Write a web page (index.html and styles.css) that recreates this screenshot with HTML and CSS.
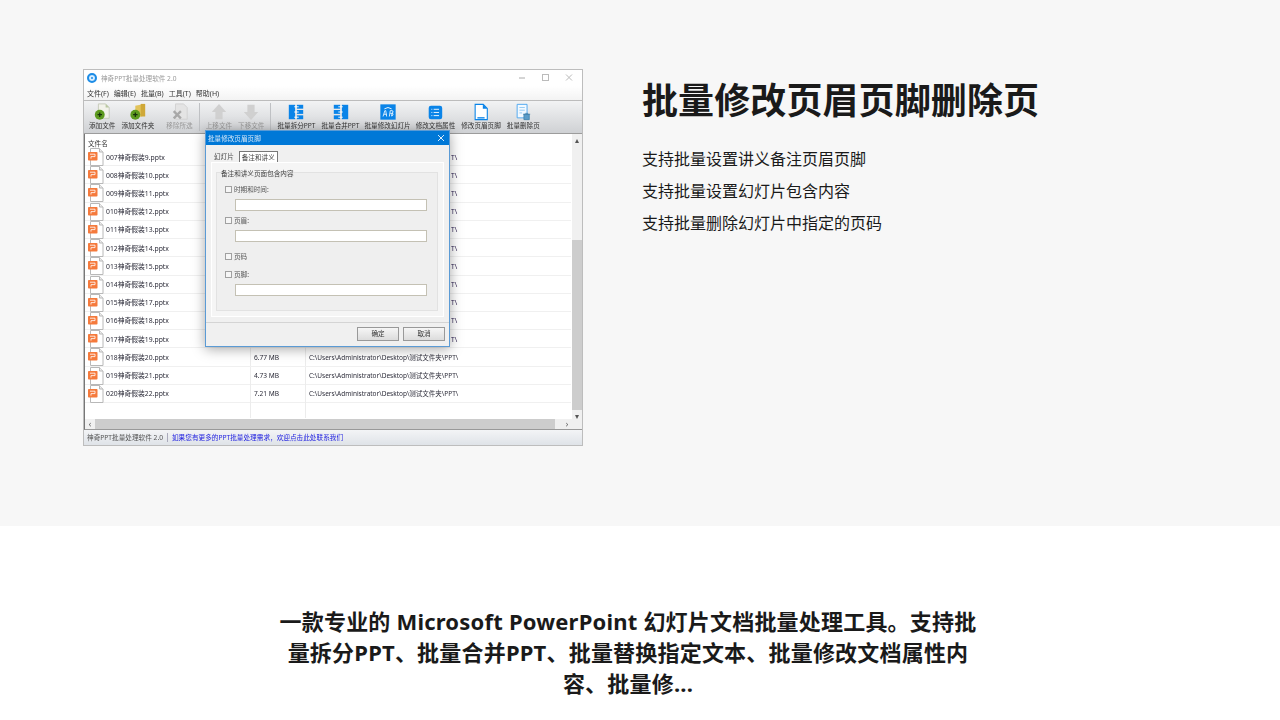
FILE: index.html
```html
<!DOCTYPE html>
<html lang="zh-CN">
<head>
    <meta charset="UTF-8">
    <meta name="viewport" content="width=device-width, initial-scale=1.0">
    <title>批量修改页眉页脚删除页</title>
    <link rel="stylesheet" href="styles.css">
</head>
<body>
    <svg class="defs" width="0" height="0">
        <symbol id="ppt" viewBox="0 0 16 18">
            <path d="M2.500 .5h9l3.500 3.500v13.500h-12.500z" fill="#fff" stroke="#b8b8b8"/>
            <path d="M11.500 .5v3.500h3.500" fill="#ececec" stroke="#b8b8b8"/>
            <rect x="0" y="4" width="9.500" height="8.500" rx=".8" fill="#f57a3c"/>
            <path d="M2 6.200h5v2.400h-4v2" fill="none" stroke="#fff" stroke-width=".8"/>
        </symbol>
    </svg>

    <section class="feature">
        <div class="shot">
            <div class="shot-top"></div>
            <div class="titlebar">
                <span class="app-logo"></span>
                <span class="app-name">神奇PPT批量处理软件 2.0</span>
                <span class="win-btns">
                    <svg width="60" height="12" viewBox="0 0 60 12">
                        <path d="M2 6h6" stroke="#aaa" fill="none"/>
                        <rect x="25.500" y="2.500" width="6" height="6" stroke="#bbb" fill="none"/>
                        <path d="M49 2.500l6 6M55 2.500l-6 6" stroke="#bbb" fill="none"/>
                    </svg>
                </span>
            </div>
            <div class="menubar">
                <span>文件(F)</span><span>编辑(E)</span><span>批量(B)</span><span>工具(T)</span><span>帮助(H)</span>
            </div>
            <div class="toolbar">
                <div class="tool">
                    <svg viewBox="0 0 20 20">
                        <path d="M6 1h8l4 4v12H6z" fill="#f2f2ea" stroke="#c4c8b8"/>
                        <path d="M14 1v4h4z" fill="#b8c8a0"/>
                        <circle cx="7.500" cy="13" r="5.500" fill="#5d9a1e"/>
                        <path d="M5 13h5M7.500 10.500v5" stroke="#16300a" stroke-width="1.400"/>
                    </svg>
                    <span>添加文件</span>
                </div>
                <div class="tool">
                    <svg viewBox="0 0 20 20">
                        <path d="M7 3l10-2v13l-10 3z" fill="#e2c35a"/>
                        <path d="M13 1h5v14h-5z" fill="#cfa838"/>
                        <circle cx="7" cy="13" r="5.500" fill="#5d9a1e"/>
                        <path d="M4.500 13h5M7 10.500v5" stroke="#16300a" stroke-width="1.400"/>
                    </svg>
                    <span>添加文件夹</span>
                </div>
                <div class="tool tool-off tool-gap">
                    <svg viewBox="0 0 20 20">
                        <path d="M5 1h9l4 4v13H5z" fill="#e4e4e4" stroke="#d0d0d0"/>
                        <path d="M3 9l8 8M11 9l-8 8" stroke="#a8a8a8" stroke-width="2.600"/>
                    </svg>
                    <span>移除所选</span>
                </div>
                <i class="tool-sep"></i>
                <div class="tool tool-off">
                    <svg viewBox="0 0 20 20">
                        <path d="M10 1l8 9h-4v8H6v-8H2z" fill="#d0d0d0"/>
                    </svg>
                    <span>上移文件</span>
                </div>
                <div class="tool tool-off">
                    <svg viewBox="0 0 20 20">
                        <path d="M10 19l8-9h-4V2H6v8H2z" fill="#d0d0d0"/>
                    </svg>
                    <span>下移文件</span>
                </div>
                <i class="tool-sep"></i>
                <div class="tool">
                    <svg viewBox="0 0 20 20">
                        <rect x="2" y="2" width="7" height="16" fill="#0a84e8"/>
                        <rect x="11" y="2" width="7" height="4.300" fill="#0a84e8"/>
                        <rect x="11" y="7.800" width="7" height="4.300" fill="#0a84e8"/>
                        <rect x="11" y="13.700" width="7" height="4.300" fill="#0a84e8"/>
                        <path d="M8 4.200h5M8 10h5M8 15.800h5" stroke="#fff"/>
                    </svg>
                    <span>批量拆分PPT</span>
                </div>
                <div class="tool">
                    <svg viewBox="0 0 20 20">
                        <rect x="11" y="2" width="7" height="16" fill="#0a84e8"/>
                        <rect x="2" y="2" width="7" height="4.300" fill="#0a84e8"/>
                        <rect x="2" y="7.800" width="7" height="4.300" fill="#0a84e8"/>
                        <rect x="2" y="13.700" width="7" height="4.300" fill="#0a84e8"/>
                        <path d="M7 4.200h5M7 10h5M7 15.800h5" stroke="#fff"/>
                    </svg>
                    <span>批量合并PPT</span>
                </div>
                <div class="tool tool-tight">
                    <svg viewBox="0 0 20 20">
                        <rect x="1.500" y="1.500" width="17" height="17" fill="#0a84e8"/>
                        <path d="M6 6.500q4-3 8 0" stroke="#fff" fill="none"/>
                        <path d="M4.500 15l2-6.500h1l1 6.500M5.500 12.500h3M11.500 15l1-6.500h2q1.500 0 1 1.500t-1 1.500h-2m2 0q1.500 0 1 1.500t-1.500 1.500z" stroke="#fff" fill="none" stroke-width=".9"/>
                    </svg>
                    <span>批量修改幻灯片</span>
                </div>
                <div class="tool tool-tight">
                    <svg viewBox="0 0 20 20">
                        <rect x="3" y="3" width="15" height="15" rx="2.500" fill="#0a84e8"/>
                        <path d="M8.500 7h6M8.500 10.500h6M8.500 14h6M6 7h1M6 10.500h1M6 14h1" stroke="#fff"/>
                    </svg>
                    <span>修改文档属性</span>
                </div>
                <div class="tool">
                    <svg viewBox="0 0 20 20">
                        <path d="M3.500 1.500h9l4.500 4.500v12.500H3.500z" fill="#fff" stroke="#0a84e8" stroke-width="1.200"/>
                        <path d="M12 1.500v5h5z" fill="#0a84e8"/>
                        <path d="M6 16.500h8" stroke="#0a84e8" stroke-width="1.500"/>
                    </svg>
                    <span>修改页眉页脚</span>
                </div>
                <div class="tool">
                    <svg viewBox="0 0 20 20">
                        <path d="M3.500 1.500h11v15h-11z" fill="#f2f9ff" stroke="#46a4ef"/>
                        <path d="M6 5h6M6 8h6M6 11h3" stroke="#8cc6f2"/>
                        <path d="M11 12.500h6v6h-6zM10 12.500h8M12.500 11.500h3" fill="#5b9cc8" stroke="#3c7ea8" stroke-width=".8"/>
                    </svg>
                    <span>批量删除页</span>
                </div>
            </div>

            <div class="list">
                <div class="list-main">
                    <div class="list-body">
                        <div class="list-head">文件名</div>
                        <div class="row"><div class="cell-name"><svg class="ppt" width="16" height="18"><use href="#ppt"/></svg>007神奇假装9.pptx</div><div class="cell-size"></div><div class="cell-tail">T\</div></div>
                        <div class="row"><div class="cell-name"><svg class="ppt" width="16" height="18"><use href="#ppt"/></svg>008神奇假装10.pptx</div><div class="cell-size"></div><div class="cell-tail">T\</div></div>
                        <div class="row"><div class="cell-name"><svg class="ppt" width="16" height="18"><use href="#ppt"/></svg>009神奇假装11.pptx</div><div class="cell-size"></div><div class="cell-tail">T\</div></div>
                        <div class="row"><div class="cell-name"><svg class="ppt" width="16" height="18"><use href="#ppt"/></svg>010神奇假装12.pptx</div><div class="cell-size"></div><div class="cell-tail">T\</div></div>
                        <div class="row"><div class="cell-name"><svg class="ppt" width="16" height="18"><use href="#ppt"/></svg>011神奇假装13.pptx</div><div class="cell-size"></div><div class="cell-tail">T\</div></div>
                        <div class="row"><div class="cell-name"><svg class="ppt" width="16" height="18"><use href="#ppt"/></svg>012神奇假装14.pptx</div><div class="cell-size"></div><div class="cell-tail">T\</div></div>
                        <div class="row"><div class="cell-name"><svg class="ppt" width="16" height="18"><use href="#ppt"/></svg>013神奇假装15.pptx</div><div class="cell-size"></div><div class="cell-tail">T\</div></div>
                        <div class="row"><div class="cell-name"><svg class="ppt" width="16" height="18"><use href="#ppt"/></svg>014神奇假装16.pptx</div><div class="cell-size"></div><div class="cell-tail">T\</div></div>
                        <div class="row"><div class="cell-name"><svg class="ppt" width="16" height="18"><use href="#ppt"/></svg>015神奇假装17.pptx</div><div class="cell-size"></div><div class="cell-tail">T\</div></div>
                        <div class="row"><div class="cell-name"><svg class="ppt" width="16" height="18"><use href="#ppt"/></svg>016神奇假装18.pptx</div><div class="cell-size"></div><div class="cell-tail">T\</div></div>
                        <div class="row"><div class="cell-name"><svg class="ppt" width="16" height="18"><use href="#ppt"/></svg>017神奇假装19.pptx</div><div class="cell-size"></div><div class="cell-tail">T\</div></div>
                        <div class="row"><div class="cell-name"><svg class="ppt" width="16" height="18"><use href="#ppt"/></svg>018神奇假装20.pptx</div><div class="cell-size">6.77 MB</div><div class="cell-path">C:\Users\Administrator\Desktop\测试文件夹\PPT\</div></div>
                        <div class="row"><div class="cell-name"><svg class="ppt" width="16" height="18"><use href="#ppt"/></svg>019神奇假装21.pptx</div><div class="cell-size">4.73 MB</div><div class="cell-path">C:\Users\Administrator\Desktop\测试文件夹\PPT\</div></div>
                        <div class="row"><div class="cell-name"><svg class="ppt" width="16" height="18"><use href="#ppt"/></svg>020神奇假装22.pptx</div><div class="cell-size">7.21 MB</div><div class="cell-path">C:\Users\Administrator\Desktop\测试文件夹\PPT\</div></div>
                        <div class="row row-empty"><div class="cell-name"></div><div class="cell-size"></div><div class="cell-path"></div></div>
                    </div>
                    <div class="vscroll">
                        <span class="arrow">▴</span>
                        <div class="vscroll-track"><div class="vscroll-thumb"></div></div>
                        <span class="arrow">▾</span>
                    </div>
                </div>
                <div class="hscroll">
                    <span class="arrow">‹</span>
                    <div class="hscroll-thumb"></div>
                    <span class="arrow">›</span>
                </div>
            </div>

            <div class="statusbar">
                <span class="status-name">神奇PPT批量处理软件 2.0</span>
                <span class="status-link">如果您有更多的PPT批量处理需求，欢迎点击此处联系我们</span>
            </div>

            <div class="dialog">
                <div class="dialog-title">
                    <span>批量修改页眉页脚</span>
                    <svg width="8" height="8" viewBox="0 0 8 8"><path d="M1 1l6 6M7 1l-6 6" stroke="#dcecfa" fill="none"/></svg>
                </div>
                <div class="tabs">
                    <span class="tab">幻灯片</span>
                    <span class="tab tab-on">备注和讲义</span>
                </div>
                <div class="tab-panel">
                    <div class="group">
                        <div class="group-label">备注和讲义页面包含内容</div>
                        <label class="check"><i></i>时期和时间:</label>
                        <div class="field"></div>
                        <label class="check"><i></i>页眉:</label>
                        <div class="field"></div>
                        <label class="check check-code"><i></i>页码</label>
                        <label class="check"><i></i>页脚:</label>
                        <div class="field"></div>
                    </div>
                </div>
                <div class="dialog-foot">
                    <span class="btn">确定</span>
                    <span class="btn">取消</span>
                </div>
            </div>
        </div>

        <div class="feature-text">
            <h2>批量修改页眉页脚删除页</h2>
            <p>支持批量设置讲义备注页眉页脚</p>
            <p>支持批量设置幻灯片包含内容</p>
            <p>支持批量删除幻灯片中指定的页码</p>
        </div>
    </section>

    <section class="intro">
        <h3>一款专业的 Microsoft PowerPoint 幻灯片文档批量处理工具。支持批量拆分PPT、批量合并PPT、批量替换指定文本、批量修改文档属性内容、批量修...</h3>
    </section>
</body>
</html>
```

FILE: styles.css
```css
body {
    font-family: "Noto Sans", "Noto Sans CJK SC", sans-serif;
    margin: 0;
    padding: 0;
    background-color: #fff;
    color: #1a1a1a;
    overflow: hidden;
}

.defs {
    display: block;
    height: 0;
}

.feature {
    display: flex;
    height: 526px;
    padding: 69px 0 0 83px;
    box-sizing: border-box;
    background-color: #f7f7f7;
}

.feature-text {
    margin-left: 59px;
}

.feature-text h2 {
    font-size: 36px;
    font-weight: 700;
    line-height: 50px;
    letter-spacing: 0.1px;
    margin: 7px 0 17px;
}

.feature-text p {
    font-size: 16px;
    line-height: 32px;
    margin: 0;
}

.intro {
    width: 700px;
    margin: 0 0 0 278px;
    padding-top: 80px;
}

.intro h3 {
    font-size: 22px;
    font-weight: 700;
    line-height: 31px;
    letter-spacing: 0.2px;
    margin: 0;
    text-align: center;
}

/* the software screenshot */
.shot {
    position: relative;
    flex: none;
    display: flex;
    flex-direction: column;
    width: 500px;
    height: 377px;
    box-sizing: border-box;
    border: 1px solid #bdbdbd;
    background-color: #f0f0f0;
    font-size: 6.6px;
    line-height: 9px;
    color: #444;
    filter: blur(0.4px);
    overflow: hidden;
}

.shot-top {
    position: absolute;
    top: -1px;
    left: 190px;
    width: 190px;
    height: 1px;
    background: linear-gradient(90deg, #777, #999 50%, #b7cfe0 70%, #666);
}

.titlebar {
    display: flex;
    align-items: center;
    flex: none;
    height: 16px;
    padding: 0 3px;
    background-color: #fff;
}

.app-logo {
    width: 10px;
    height: 10px;
    border-radius: 50%;
    background-color: #1c8ce6;
    border: 2px solid #1c8ce6;
    box-sizing: border-box;
    background-clip: padding-box;
    box-shadow: inset 0 0 0 2px #d9eeff;
}

.app-name {
    margin-left: 4px;
    color: #9a9a9a;
}

.win-btns {
    display: flex;
    margin-left: auto;
    margin-right: 2px;
}

.menubar {
    display: flex;
    gap: 5px;
    flex: none;
    height: 14px;
    align-items: center;
    padding: 0 3px;
    background: linear-gradient(#fff, #f3f3f3);
    color: #333;
    font-size: 7px;
}

.toolbar {
    display: flex;
    flex: none;
    gap: 6px;
    height: 34px;
    padding: 0 0 0 5px;
    box-sizing: border-box;
    border-top: 1px solid #bcbcbc;
    border-bottom: 1px solid #9c9c9c;
    background: linear-gradient(#f2f3f4, #cfd1d4);
    color: #333;
}

.tool {
    display: flex;
    flex-direction: column;
    align-items: center;
    flex: none;
    padding-top: 2px;
    white-space: nowrap;
}

.tool svg {
    display: block;
    width: 18px;
    height: 18px;
}

.tool-off {
    color: #9a9a9a;
}

.tool-gap {
    margin-left: 6px;
}

.tool-tight {
    margin-left: -1px;
}

.tool-sep {
    flex: none;
    width: 1px;
    margin: 2px 0;
    background-color: #bfc1c4;
}

/* file list */
.list {
    display: flex;
    flex-direction: column;
    flex: none;
    height: 295px;
    background-color: #fff;
    border-left: 1px solid #777;
    border-bottom: 1px solid #999;
}

.list-main {
    display: flex;
    flex: 1;
    min-height: 0;
}

.list-body {
    flex: 1;
    min-width: 0;
    overflow: hidden;
}

.list-head {
    height: 14px;
    padding: 5px 0 0 3px;
    box-sizing: border-box;
    color: #333;
}

.row {
    display: grid;
    grid-template-columns: 166px 55px 1fr;
    height: 18.23px;
    border-bottom: 1px solid #f0f0f0;
    box-sizing: border-box;
    white-space: nowrap;
    align-items: center;
    color: #2d2d3a;
}

.row-empty {
    height: 15px;
    border-bottom: none;
    align-items: stretch;
}

.cell-name {
    display: flex;
    align-items: center;
    height: 100%;
    padding-left: 3px;
    border-right: 1px solid #ececec;
    font-size: 6.8px;
}

.ppt {
    flex: none;
    margin-right: 2px;
}

.cell-size {
    display: flex;
    align-items: center;
    height: 100%;
    padding-left: 3px;
    border-right: 1px solid #ececec;
}

.cell-path {
    padding-left: 3px;
    font-size: 6.5px;
}

/* only the end of the path shows past the dialog */
.cell-tail {
    padding-left: 145px;
    color: #2d2050;
}

.vscroll {
    display: flex;
    flex-direction: column;
    flex: none;
    width: 10px;
    margin-left: 1px;
    background-color: #f0f0f0;
    text-align: center;
}

.vscroll-track {
    flex: 1;
    padding-top: 95px;
}

.vscroll-thumb {
    height: 170px;
    background-color: #cdcdcd;
}

.arrow {
    flex: none;
    display: block;
    height: 11px;
    line-height: 11px;
    font-size: 8px;
    color: #555;
}

.hscroll {
    display: flex;
    flex: none;
    height: 10px;
    padding-right: 10px;
    background-color: #f0f0f0;
}

.hscroll .arrow {
    width: 10px;
    height: 10px;
    line-height: 9px;
    text-align: center;
}

.hscroll-thumb {
    width: 460px;
    background-color: #cdcdcd;
}

.hscroll .arrow:last-child {
    margin-left: auto;
}

.statusbar {
    display: flex;
    flex: 1;
    align-items: center;
    padding-left: 3px;
    background: linear-gradient(#f3f4f6, #dfe3e8);
    color: #555;
    font-size: 6.65px;
}

.status-name {
    padding-right: 4px;
    border-right: 1px solid #aab;
}

.status-link {
    margin-left: 4px;
    color: #2323e0;
}

/* dialog that lies over the list */
.dialog {
    position: absolute;
    left: 121px;
    top: 60px;
    display: flex;
    flex-direction: column;
    width: 245px;
    height: 217px;
    box-sizing: border-box;
    border: 1px solid #5b9bd5;
    background-color: #f0f0f0;
    box-shadow: 0 2px 12px rgba(0, 0, 0, 0.35);
}

.dialog-title {
    display: flex;
    align-items: center;
    justify-content: space-between;
    flex: none;
    height: 14px;
    padding: 0 4px 0 2px;
    background-color: #0078d7;
    color: #d5e8f8;
}

.tabs {
    display: flex;
    flex: none;
    gap: 3px;
    height: 17px;
    padding: 5px 0 0 6px;
    box-sizing: border-box;
    align-items: flex-end;
}

.tab {
    height: 11px;
    padding: 1px 2px 0;
    box-sizing: border-box;
    color: #444;
}

.tab-on {
    width: 39px;
    background-color: #fff;
    border: 1px solid #777;
    border-bottom: none;
    white-space: nowrap;
}

.tab-panel {
    flex: none;
    height: 155px;
    margin: 0 5px;
    padding: 9px 5px 5px 4px;
    box-sizing: border-box;
    background-color: #f5f5f5;
    border: 1px solid #fff;
}

.group {
    height: 139px;
    padding: 0 8px;
    box-sizing: border-box;
    border: 1px solid #e2e2e2;
    background-color: #efefef;
}

.group-label {
    margin: -4px 0 0 -4px;
    height: 14px;
}

.check {
    display: flex;
    align-items: center;
    gap: 2px;
    height: 8px;
    margin-top: 2px;
    color: #555;
}

.check i {
    width: 7px;
    height: 7px;
    box-sizing: border-box;
    border: 1px solid #a0a0a0;
    background-color: #f6f6f6;
}

.field {
    width: 192px;
    height: 12px;
    margin: 6px 0 5px 10px;
    box-sizing: border-box;
    border: 1px solid #c4c1b4;
    background-color: #fff;
}

.check-code {
    margin: 10px 0 10px;
}

.dialog-foot {
    display: flex;
    flex: 1;
    justify-content: flex-end;
    gap: 4px;
    padding: 4px 4px 0 0;
    box-sizing: border-box;
    margin-top: 5px;
    border-top: 1px solid #d4d4d4;
}

.btn {
    width: 42px;
    height: 14px;
    line-height: 12px;
    box-sizing: border-box;
    border: 1px solid #999;
    background: linear-gradient(#f6f6f6, #dcdcdc);
    text-align: center;
    color: #333;
}
```
